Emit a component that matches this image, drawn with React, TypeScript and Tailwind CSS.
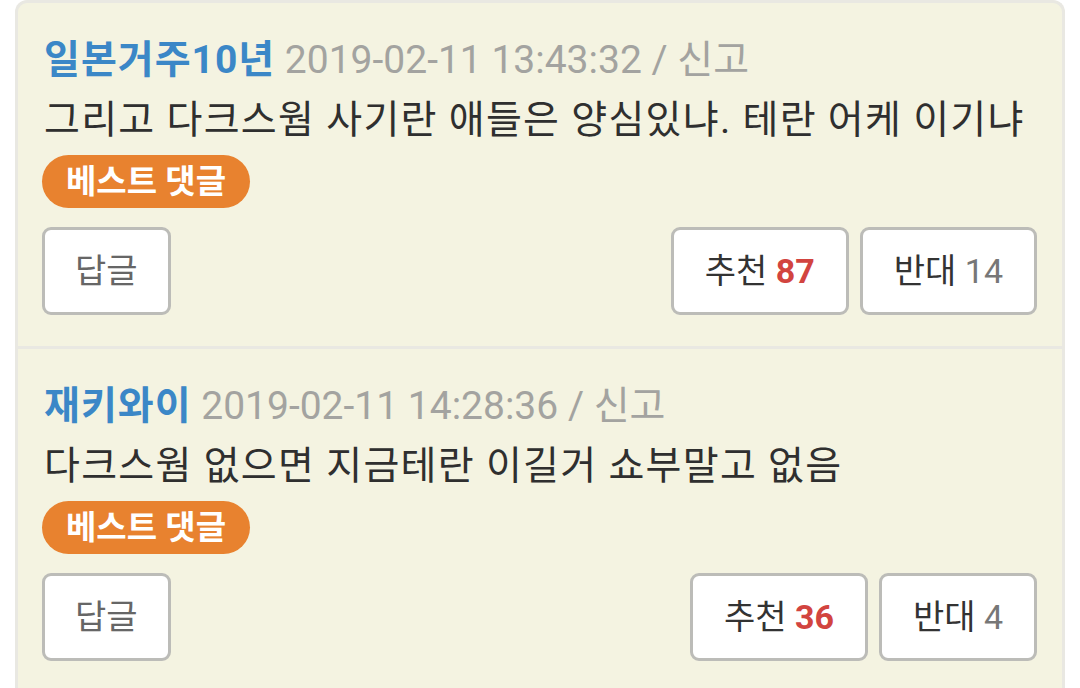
import React from 'react';

interface Comment {
    name: string;
    date: string;
    body: string;
    up: number;
    down: number;
}

const comments: Comment[] = [
    { name: '일본거주10년', date: '2019-02-11 13:43:32', body: '그리고 다크스웜 사기란 애들은 양심있냐. 테란 어케 이기냐', up: 87, down: 14 },
    { name: '재키와이', date: '2019-02-11 14:28:36', body: '다크스웜 없으면 지금테란 이길거 쇼부말고 없음', up: 36, down: 4 },
];

function CommentItem({ c, first }: { c: Comment; first: boolean }) {
    return (
        <div className={`pl-[24px] pr-[25px] pt-[27px] pb-[31px] ${first ? '' : 'border-t-[3px] border-[#e9e8e2]'}`}>
            <div className="pl-[2px] text-[39px] leading-[60px] whitespace-nowrap">
                <span className="font-bold tracking-[1px] text-[#3b87c7]">{c.name}</span>
                <span className="text-[#a3a3a0]"> {c.date} / 신고</span>
            </div>
            <div className="pl-[2px] text-[39px] leading-[60px] tracking-[1.3px] text-[#2f2f2f] whitespace-nowrap">{c.body}</div>
            <div className="mt-[5px] inline-flex h-[53px] items-center rounded-full bg-[#e8822f] px-[24px] text-[33px] font-bold text-white">
                베스트 댓글
            </div>
            <div className="mt-[19px] flex items-center">
                <button className="h-[88px] rounded-[9px] border-[3px] border-[#bcbcb8] bg-white px-[30px] text-[34px] text-[#666]">
                    답글
                </button>
                <div className="ml-auto flex gap-[11px]">
                    <button className="h-[88px] rounded-[9px] border-[3px] border-[#bcbcb8] bg-white px-[31px] text-[34px] text-[#333]">
                        추천 <span className="font-bold text-[#d2443f]">{c.up}</span>
                    </button>
                    <button className="h-[88px] rounded-[9px] border-[3px] border-[#bcbcb8] bg-white px-[31px] text-[34px] text-[#333]">
                        반대 <span className="text-[#777]">{c.down}</span>
                    </button>
                </div>
            </div>
        </div>
    );
}

export default function App() {
    return (
        <div className="h-[688px] w-[1080px] overflow-hidden bg-white pl-[15px] pr-[15px]" style={{ fontFamily: "Roboto, 'Noto Sans CJK KR', sans-serif" }}>
            <div className="rounded-t-[12px] border-[3px] border-b-0 border-[#e9e8e2] bg-[#f4f3e1]">
                {comments.map((c, i) => (
                    <CommentItem key={i} c={c} first={i === 0} />
                ))}
            </div>
        </div>
    );
}
